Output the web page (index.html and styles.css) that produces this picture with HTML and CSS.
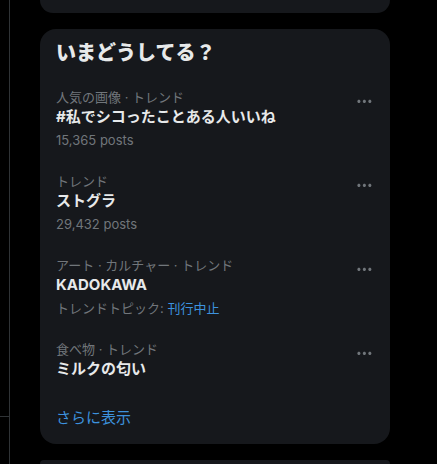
FILE: index.html
```html
<!DOCTYPE html>
<html lang="ja">
<head>
<meta charset="utf-8">
<link rel="stylesheet" href="styles.css">
</head>
<body>
<div class="page">
  <div class="rail"><div class="rail-top"></div></div>
  <div class="side">
    <div class="card stub"></div>
    <section class="card">
      <h2 class="card-title">いまどうしてる？</h2>
      <div class="trend">
        <div class="trend-body">
          <div class="meta">人気の画像 · トレンド</div>
          <div class="name">#私でシコったことある人いいね</div>
          <div class="sub">15,365 posts</div>
        </div>
        <svg class="more" viewBox="0 0 24 24"><path d="M3 12c0-1.1.9-2 2-2s2 .9 2 2-.9 2-2 2-2-.9-2-2zm9 2c1.1 0 2-.9 2-2s-.9-2-2-2-2 .9-2 2 .9 2 2 2zm7 0c1.1 0 2-.9 2-2s-.9-2-2-2-2 .9-2 2 .9 2 2 2z"/></svg>
      </div>
      <div class="trend">
        <div class="trend-body">
          <div class="meta">トレンド</div>
          <div class="name">ストグラ</div>
          <div class="sub">29,432 posts</div>
        </div>
        <svg class="more" viewBox="0 0 24 24"><path d="M3 12c0-1.1.9-2 2-2s2 .9 2 2-.9 2-2 2-2-.9-2-2zm9 2c1.1 0 2-.9 2-2s-.9-2-2-2-2 .9-2 2 .9 2 2 2zm7 0c1.1 0 2-.9 2-2s-.9-2-2-2-2 .9-2 2 .9 2 2 2z"/></svg>
      </div>
      <div class="trend">
        <div class="trend-body">
          <div class="meta">アート · カルチャー · トレンド</div>
          <div class="name">KADOKAWA</div>
          <div class="sub">トレンドトピック: <span class="link">刊行中止</span></div>
        </div>
        <svg class="more" viewBox="0 0 24 24"><path d="M3 12c0-1.1.9-2 2-2s2 .9 2 2-.9 2-2 2-2-.9-2-2zm9 2c1.1 0 2-.9 2-2s-.9-2-2-2-2 .9-2 2 .9 2 2 2zm7 0c1.1 0 2-.9 2-2s-.9-2-2-2-2 .9-2 2 .9 2 2 2z"/></svg>
      </div>
      <div class="trend">
        <div class="trend-body">
          <div class="meta">食べ物 · トレンド</div>
          <div class="name">ミルクの匂い</div>
        </div>
        <svg class="more" viewBox="0 0 24 24"><path d="M3 12c0-1.1.9-2 2-2s2 .9 2 2-.9 2-2 2-2-.9-2-2zm9 2c1.1 0 2-.9 2-2s-.9-2-2-2-2 .9-2 2 .9 2 2 2zm7 0c1.1 0 2-.9 2-2s-.9-2-2-2-2 .9-2 2 .9 2 2 2z"/></svg>
      </div>
      <div class="show-more">さらに表示</div>
    </section>
    <div class="card next"></div>
  </div>
</div>
</body>
</html>
```

FILE: styles.css
```css
* { box-sizing: border-box; }
html, body {
  margin: 0;
  padding: 0;
  background: #000;
  height: 100%;
  overflow: hidden;
}
body {
  font-family: Inter, "Noto Sans CJK JP", sans-serif;
  color: #e7e9ea;
}
.page {
  display: flex;
  height: 464px;
  overflow: hidden;
}
.rail {
  width: 10px;
  flex: none;
  border-right: 1px solid #2f3336;
}
.rail-top {
  height: 417px;
  border-bottom: 1px solid #2f3336;
}
.side {
  margin-left: 30px;
  width: 350px;
  display: flex;
  flex-direction: column;
  gap: 16px;
}
.card {
  background: #16181c;
  border-radius: 16px;
  flex: none;
}
.stub {
  height: 13px;
  border-radius: 0 0 16px 16px;
}
.next {
  flex: 1 1 auto;
  min-height: 0;
  border-radius: 16px 16px 0 0;
}
.card-title {
  margin: 0;
  padding: 12px 16px;
  font-size: 20px;
  line-height: 24px;
  font-weight: 800;
  color: #e7e9ea;
}
.trend {
  display: flex;
  align-items: flex-start;
  padding: 12px 16px 13px;
}
.trend-body {
  flex: 1;
  min-width: 0;
}
.meta {
  font-size: 13px;
  line-height: 16px;
  color: #71767b;
}
.name {
  margin-top: 2px;
  font-size: 15px;
  line-height: 20px;
  font-weight: 700;
  color: #e7e9ea;
}
.sub {
  margin-top: 5px;
  font-size: 13px;
  line-height: 16px;
  color: #71767b;
}
.link {
  color: #3d92de;
}
.more {
  width: 18.75px;
  height: 18.75px;
  margin-top: 2.5px;
  fill: #71767b;
  flex: none;
}
.show-more {
  padding: 16px;
  font-size: 15px;
  line-height: 20px;
  color: #3d92de;
}
```
